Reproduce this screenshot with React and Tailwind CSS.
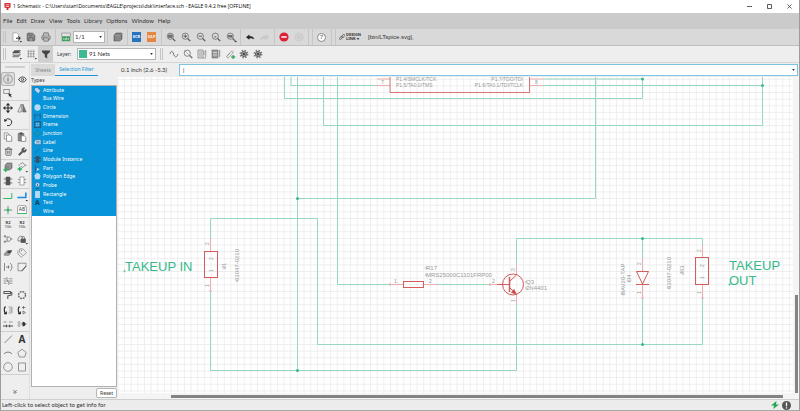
import React from "react";
import { Printer, Save, Eye, Trash2, Wrench, Move, ChevronsDown, Tags } from "lucide-react";

const INK = "#5a5a5a";

function Svg({ children, size = "size-[10px]" }) {
  return (
    <svg viewBox="0 0 10 10" className={`${size} shrink-0 overflow-visible`} fill="none" stroke={INK} strokeWidth="0.7" aria-hidden="true">
      {children}
    </svg>
  );
}

const Caret = () => <path d="M8.6 9l2.4 0-1.2 1.6z" fill="#333" stroke="none" />;

const Lens = ({ children }) => (
  <Svg>
    <circle cx="4.3" cy="4.2" r="3.1" />
    <path d="M6.6 6.5L9.3 9.2" strokeWidth="1.2" />
    {children}
  </Svg>
);

const icons = {
  newDoc: <Svg><path d="M2 .8h3.6L7.8 3v6.2H2z" fill="#fff" stroke="#777" strokeWidth="0.5" /><path d="M5 6.2h4M7.4 4.4L9.4 6.2 7.4 8" strokeWidth="1" stroke="#222" /><Caret /></Svg>,
  save: <Save className="size-[10px]" fill="#999" color="#555" strokeWidth={2} />,
  print: <Printer className="size-[10px]" color="#777" fill="#bbb" strokeWidth={2} />,
  board: <Svg><rect x=".8" y="1" width="8.4" height="3.6" fill="#ddd" stroke="#777" strokeWidth=".5" /><rect x=".8" y="4.6" width="8.4" height="4.6" fill="#3a9e58" stroke="none" /><path d="M2 3.2h6M2.3 7.8V6M4 6v1.8h1V6h1v1.8M7.5 6v1.8" stroke="#e9f7ec" strokeWidth=".6" /></Svg>,
  book: <Svg><path d="M1 3l2-2h6v6L7 9H1z" fill="#777" stroke="#444" strokeWidth=".5" /><path d="M1 3h6v6M7 3l2-2M3 3v6M5 3v6" stroke="#ccc" strokeWidth=".4" /></Svg>,
  undo: <Svg><path d="M1 5.2L4.4 2.6v1.6c2.6 0 4.2.3 4.9 3.3C8 6.3 6.600 6.200 4.400 6.200v1.600z" fill="#222" stroke="none" /></Svg>,
  redo: <Svg><path d="M9 5.200L5.600 2.600v1.600C3 4.200 1.400 4.500.7 7.500 2 6.300 3.400 6.200 5.600 6.200v1.600z" fill="#ccc" stroke="#bbb" strokeWidth=".4" /></Svg>,
  stop: <Svg><circle cx="5" cy="5" r="4.600" fill="#dd2034" stroke="none" /><path d="M2.300 5h5.400" stroke="#fff" strokeWidth="1.500" /></Svg>,
  go: <Svg><circle cx="5" cy="5" r="4.100" fill="#d2d2d2" stroke="#c9c9c9" /><path d="M4 3.300v3.400M6 3.300v3.400" stroke="#c6c6c6" /></Svg>,
  layers: <Svg><path d="M1.500 8L3.500 5.500h6L7.500 8z" fill="#999" stroke="#555" strokeWidth=".4" /><path d="M1.500 6L3.500 3.500h6L7.500 6z" fill="#ddd" stroke="#555" strokeWidth=".4" /><path d="M1.500 4L3.500 1.500h6L7.500 4z" fill="#555" stroke="#444" strokeWidth=".4" /><Caret /></Svg>,
  grid: <Svg><path d="M2.500.800v8M5 .8v8M7.500.800v8M1 2.300h8M1 4.800h8M1 7.300h8" stroke="#888" strokeWidth=".6" /><Caret /></Svg>,
  filter: <Svg><path d="M1 1.500h8v1.600L6.200 5.600V9.500L3.800 8V5.600L1 3.100z" fill="#444" stroke="none" /></Svg>,
  wave: <Svg><path d="M1 5C1.500 1.500 3.800 1.500 4.600 5S7.800 9 9 5" strokeWidth=".8" /></Svg>,
  probeLens: <Lens><path d="M1 1l8 8" stroke="#888" strokeWidth=".5" /></Lens>,
  sheet1: <Svg><path d="M1 1h5v8H1zM2 3h3M2 5h3M2 7h3" strokeWidth=".6" /><path d="M7 2v4M8.700 1v7M6 9h3" stroke="#777" /></Svg>,
  sheet2: <Svg><rect x="1" y="1" width="6" height="8" fill="#999" strokeWidth=".5" /><path d="M2 3.500h4M2 6h4" stroke="#eee" /><path d="M8.700 1v7" /></Svg>,
  clip: <Svg><path d="M1.500 7.500L6 2.500c1.200-1.200 3 .3 1.900 1.600L4 8.200C2.800 9.300 1 8.500 2.200 7L5.500 3.600" stroke="#777" strokeWidth=".6" /><path d="M8.200 6v4M6.200 8h4" stroke="#35a855" strokeWidth="1.300" /></Svg>,
  gear: <Svg><circle cx="5" cy="5" r="3.600" stroke="#777" strokeWidth="1.600" strokeDasharray="1.400 1.430" /><circle cx="5" cy="5" r="2.600" fill="#999" stroke="#555" strokeWidth=".8" /><circle cx="5" cy="5" r="1" fill="#333" stroke="none" /></Svg>,
  info: <Svg><circle cx="5" cy="5" r="4.300" strokeWidth=".5" /><path d="M5 4.200v3.300M5 2.300v1" strokeWidth=".9" /></Svg>,
  eye: <Eye className="size-[9px]" color="#444" strokeWidth={2.500} />,
  group: <Svg><rect x=".8" y="1.500" width="5.400" height="4" strokeWidth=".6" /><path d="M5.500 5l3.500 1.800-1.400.5 1.200 1.700-.9.500-1-1.700-1 1z" fill="#333" stroke="none" /></Svg>,
  move: <Move className="size-[10px]" color="#222" strokeWidth={2.500} />,
  mirror: <Svg><path d="M4.300 1v8H.800z" strokeWidth=".6" /><path d="M5.800 1v8h3.400z" fill="#777" strokeWidth=".6" /></Svg>,
  rotate: <Svg><path d="M2.300 3.300A3.500 3.500 0 1 1 4 8.500" stroke="#222" strokeWidth=".9" /><path d="M1 2l.6 3 2.600-1.400z" fill="#222" stroke="none" /></Svg>,
  copy: <Svg><path d="M1.200.800h3.500L6 2.300V7H1.200z" fill="#eee" strokeWidth=".5" /><path d="M3.500 3h3.500L8.700 4.700v4.600H3.500z" fill="#fff" strokeWidth=".6" /></Svg>,
  paste: <Svg><path d="M1.200 1.500h5.600V9H1.200z" fill="#888" strokeWidth=".5" /><path d="M2.800.800h2.400v1.400H2.800z" fill="#444" /><path d="M4.300 3.800h3L8.800 5.300v4.100H4.300z" fill="#fff" strokeWidth=".6" /></Svg>,
  trash: <Trash2 className="size-[9px]" color="#555" strokeWidth={2.200} />,
  wrench: <Wrench className="size-[9px]" color="#444" fill="#555" strokeWidth={1.500} />,
  addPart: <Svg><path d="M2 3l2-2h5v5L7 8H2z" fill="#888" stroke="#444" strokeWidth=".5" /><path d="M2 3h5v5M7 3l2-2" stroke="#ccc" strokeWidth=".4" /><path d="M2.600 5.500v4.400M.4 7.700h4.400" stroke="#2fae59" strokeWidth="1.400" /></Svg>,
  addGate: <Svg><path d="M3.500 1.500L6 .8 8 3.300 6 5.500 4 4.500M8 3.300h1.600M1.500 3h2" strokeWidth=".6" /><path d="M2.800 4.800v4.400M.6 7h4.400" stroke="#2fae59" strokeWidth="1.400" /><Caret /></Svg>,
  chip: <Svg><rect x="3" y="1" width="4" height="8" fill="#555" strokeWidth=".5" /><path d="M.8 3h2M.8 7h2M7 3h2.200M7 7h2.200" strokeWidth=".9" /></Svg>,
  chipOpen: <Svg><rect x="3" y="1" width="4" height="8" fill="#fff" strokeWidth=".5" /><path d="M.8 3.500h2M.8 6.500h2M7 3.500h2.200M7 6.500h2.200" strokeWidth=".5" /></Svg>,
  net: <Svg><path d="M.3 7.500h8.500V2" stroke="#36b86c" strokeWidth="1" /></Svg>,
  bus: <Svg><path d="M.3 6.500h8.500V1.500" stroke="#1e8be0" strokeWidth="1.600" /><Caret /></Svg>,
  junction: <Svg><path d="M5 .8v8.400M.800 5h8.400" stroke="#2f7a50" strokeWidth=".7" /><circle cx="5" cy="5" r="1.500" fill="#36b86c" stroke="none" /></Svg>,
  replace: <Svg><path d="M.8 2.300h2.500M2 1v2.600M.8 7.700h2.500M2 6.400V9M4 3h1.800c2.600 0 2.600 4.200 0 4.200H4zM7.800 5h1.700" strokeWidth=".7" /></Svg>,
  lock: <Svg><path d="M1 7V5.500C1 2 5 1 6 4M1 7h3" strokeWidth=".7" /><rect x="4" y="5" width="4.500" height="3.600" fill="#555" /><path d="M5 5V3.500c0-1.500 2.500-1.500 2.500 0V5" /><Caret /></Svg>,
  eraser: <Svg><path d="M.8 6.500L4 2.500h5L6 7.500H1.500z" fill="#999" strokeWidth=".3" /><path d="M4 4.500L5.500 2.500H9L7 5.500z" fill="#444" stroke="none" /></Svg>,
  tag: <Tags className="size-[10px]" color="#777" strokeWidth={1.600} />,
  pinswap: <Svg><path d="M1.500 1v8M3 5h3.500M5.500 3.500v3M7 1c2.500 1.500 2.500 6.500 0 8" strokeWidth=".7" /></Svg>,
  miter: <Svg><path d="M9 1.200H1v7.600h4.500L9 4.500z" strokeWidth=".6" /><path d="M4.500 9L9 4" strokeWidth="1" /></Svg>,
  split: <Svg><path d="M.5 2.800H3.500L6 7.200H9.500M.5 5H9.500M.5 7.200H3.500M6 2.800H9.500M3.500 1L5 2.800M5 7.200L6 9" strokeWidth=".6" /></Svg>,
  paint: <Svg><path d="M1 1.500h6.500v2H1zM7.500 2.500h1.300v2.300L4.800 6v3" strokeWidth="1.100" /></Svg>,
  ring: <Svg><circle cx="5" cy="5" r="3.500" strokeDasharray="1.800 .95" strokeWidth="1.300" /></Svg>,
  swapA: <Svg><path d="M2.500 1.500C.8 3 .8 7 2.500 8.500M1 8.700h2.300V6.500" strokeWidth="1.100" stroke="#222" /><path d="M5.500 2h3.500v6H5.500M6 4h3M6 6h3" strokeWidth=".5" /></Svg>,
  swapB: <Svg><path d="M2.500 1.500C.8 3 .8 7 2.500 8.500M1 8.700h2.300V6.500" strokeWidth="1.100" stroke="#222" /><path d="M6.500 1v3M5 2.500h3.500M6 6l2.500 1.500L6 9z" strokeWidth=".7" /></Svg>,
  gap: <Svg><path d="M.5 3h3M6 3h3.500" strokeWidth=".6" /><path d="M0 7h4M6 7h4M3 5.800L4.400 7 3 8.200M7 5.800L5.600 7 7 8.200" strokeWidth=".8" stroke="#222" /></Svg>,
  invoke: <Svg><circle cx="2" cy="3.500" r="1" strokeWidth=".5" /><circle cx="2" cy="6.500" r="1" strokeWidth=".5" /><path d="M3.800 5h5.700" /><path d="M5.500 2.700c4 0 4 4.600 0 4.600z" fill="#333" stroke="none" /></Svg>,
  line: <Svg><path d="M1.500 9L9 1.500" strokeWidth=".7" /></Svg>,
  arc: <Svg><path d="M1 6c2-2.500 6-2.500 8 0" strokeWidth=".8" /></Svg>,
  polygon: <Svg><path d="M5 1.200l4.200 3.200L7.700 9H2.300L.800 4.400z" strokeWidth=".6" /></Svg>,
  circle: <Svg><circle cx="5" cy="5" r="4.300" strokeWidth=".6" /></Svg>,
  rect: <Svg><rect x="1.700" y="1" width="6.600" height="8" strokeWidth=".6" /></Svg>,
};

const letterA = <span className="font-['Open_Sans'] text-[10px] leading-none font-bold text-[#333]">A</span>;
const labelIcon = (
  <span className="flex h-[9px] w-[10px] items-center justify-center rounded-t-[3px] border border-[#aaa] border-b-[#36b86c] bg-white text-[5px] leading-none text-[#333]">AB</span>
);
const valueIcon = (
  <span className="flex flex-col text-center text-[4px] leading-[4px] font-bold text-[#444]"><span>R2</span><span className="text-[#888]">10k</span></span>
);

const toolGroups = [
  { grow: "grow-2", rows: "grid-rows-2", tools: [["Info", icons.info], ["Show", icons.eye], ["Group", icons.group], null] },
  { grow: "grow-2", rows: "grid-rows-2", tools: [["Move", icons.move], ["Mirror", icons.mirror], ["Rotate", icons.rotate], null] },
  { grow: "grow-2", rows: "grid-rows-2", tools: [["Copy", icons.copy], ["Paste", icons.paste], ["Delete", icons.trash], ["Change", icons.wrench]] },
  { grow: "grow-2", rows: "grid-rows-2", tools: [["Add part", icons.addPart], ["Add gate", icons.addGate], ["Module", icons.chip], ["Port", icons.chipOpen]] },
  { grow: "grow-2", rows: "grid-rows-2", tools: [["Net", icons.net], ["Bus", icons.bus], ["Junction", icons.junction], ["Label", labelIcon]] },
  {
    grow: "grow-8",
    rows: "grid-rows-8",
    tools: [
      ["Name", valueIcon], ["Value", valueIcon], ["Replace", icons.replace], ["Lock", icons.lock],
      ["Smash", icons.eraser], ["Attribute", icons.tag], ["Pin swap", icons.pinswap], ["Miter", icons.miter],
      ["Split", icons.split], null, ["Paint", icons.paint], ["Optimize", icons.ring],
      ["Swap", icons.swapA], ["Gate swap", icons.swapB], ["Slice", icons.gap], ["Invoke", icons.invoke],
    ],
  },
  { grow: "grow-3", rows: "grid-rows-3", tools: [["Line", icons.line], ["Text", letterA], ["Arc", icons.arc], ["Polygon", icons.polygon], ["Circle", icons.circle], ["Rectangle", icons.rect]] },
];

const PALE = "#b5d9f3";
const DARK = "#265d86";
const types = [
  ["Attribute", <Svg size="size-[7px]"><path d="M1 1h4l4.500 4.500-3.500 4L1 5z" fill={PALE} stroke={DARK} /></Svg>],
  ["Bus Wire", <Svg size="size-[7px]"><path d="M0 8h8V1" stroke="#2389e8" strokeWidth="1.500" /></Svg>],
  ["Circle", <Svg size="size-[7px]"><circle cx="5" cy="5" r="4.500" fill={PALE} stroke="none" /></Svg>],
  ["Dimension", <Svg size="size-[7px]"><path d="M1 1v8M9 1v8M1 3h8" stroke={DARK} strokeWidth="1.200" /></Svg>],
  ["Frame", <Svg size="size-[7px]"><rect x="1" y="1" width="8" height="8" stroke={DARK} strokeWidth="2" /><rect x="3" y="3" width="4" height="4" stroke={PALE} /></Svg>],
  ["Junction", <Svg size="size-[7px]"><path d="M5 0v10M0 5h10" stroke={DARK} /><circle cx="5" cy="5" r="1.700" fill="#22a97e" stroke="none" /></Svg>],
  ["Label", <Svg size="size-[7px]"><path d="M0 5l2-4h8v7H2z" fill={PALE} stroke={DARK} /><path d="M3 3.500h5M3 5.500h5" stroke={DARK} /></Svg>],
  ["Line", <Svg size="size-[7px]"><path d="M1 9L9 1" stroke={DARK} /></Svg>],
  ["Module Instance", <Svg size="size-[7px]"><rect x="2.500" y="0" width="5" height="10" fill="#31566f" stroke="none" /><path d="M0 3h10M0 7h10" stroke="#31566f" strokeWidth="1.500" /></Svg>],
  ["Part", <Svg size="size-[7px]"><path d="M2 0v10M2 5l5-3M2 5l5 4" stroke={DARK} strokeWidth="1.200" /><path d="M4 4l4 2-4 3z" fill={PALE} stroke="none" /></Svg>],
  ["Polygon Edge", <Svg size="size-[7px]"><path d="M3 .5h4L9.500 4 8 9H2L.5 4z" fill={PALE} stroke="none" /></Svg>],
  ["Probe", <Svg size="size-[7px]"><circle cx="5" cy="4" r="3.300" fill={PALE} stroke={DARK} /><path d="M5 3v3M2.500 9.500h5" stroke={DARK} strokeWidth="1.300" /></Svg>],
  ["Rectangle", <Svg size="size-[7px]"><rect x="1.500" y="0" width="7" height="10" fill={PALE} stroke="none" /></Svg>],
  ["Text", <span className="text-[7px] leading-none font-bold text-[#12405f]">A</span>],
  ["Wire", <Svg size="size-[7px]"><path d="M2 1v4M4 8h5" stroke="#1d7fb8" /><circle cx="3.500" cy="6.500" r="1" fill="#22a97e" stroke="none" /></Svg>],
];

function Tool({ name, width = "w-[15px]", extra = "", children }) {
  return (
    <button type="button" aria-label={name} className={`flex h-full shrink-0 items-center justify-center ${width} ${extra}`}>
      {children}
    </button>
  );
}

const Sep = ({ width = "w-1" }) => (
  <div className={`flex h-full shrink-0 justify-center ${width}`}><div className="w-px bg-[#c6c6c6]" /></div>
);
const DoubleSep = ({ width = "w-2" }) => (
  <div className={`flex h-full shrink-0 justify-center gap-[3px] ${width}`}><div className="w-px bg-[#c6c6c6]" /><div className="w-px bg-[#c6c6c6]" /></div>
);
const Handle = ({ width = "w-[7px]" }) => (
  <div className={`flex h-3 shrink-0 justify-center gap-px ${width}`}><div className="w-px bg-[#c4c4c4]" /><div className="w-px bg-[#c4c4c4]" /></div>
);

function Combo({ id, label, value, width, pad }) {
  return (
    <div className={`relative h-[12px] shrink-0 ${width}`}>
      <select id={id} aria-label={label} className={`block size-full appearance-none border border-[#b4b4b4] bg-white font-['Lato',sans-serif] text-[6px] leading-none text-[#333] ${pad}`}>
        <option>{value}</option>
      </select>
      <svg viewBox="0 0 4 3" className="pointer-events-none absolute top-[5px] right-[3px] h-[2px] w-[3px]" aria-hidden="true"><path d="M0 0h4L2 3z" fill="#333" /></svg>
    </div>
  );
}

const wires = [
  "M284.500 77V98.500H642.500V79H543", "M291 77V85.500H378", "M297.500 77V370.500", "M297.500 198.500H595.500V77",
  "M323.500 77V125.500H762.500V77", "M543 85.500H762.500", "M337.500 77V284.500H390", "M437 284.500H490",
  "M210.500 238V218.500H317.500V344.500H702.500V298", "M210.500 291V370.500H516.500V303", "M516.500 265V238.500H702.500V245",
  "M642.500 238.500V258M642.500 298V344.500",
];
const dots = [[642.5, 79], [762.5, 85.5], [297.5, 198.5], [297.5, 370.5], [642.5, 238.5], [642.5, 344.5]];
const pins = [
  "M377 79H390M377 85.500H390M530 79H543M530 85.500H543", "M210.500 238V251M210.500 278V291", "M390 284.500H403M424 284.500H437",
  "M490 284.500H503M516.500 265V275M516.500 294V304", "M642.500 258V271M642.500 285V298", "M702.500 245V257M702.500 285V298",
  "M209 291h3M641 298h3M701 298h3M390 283v3M490 283v3",
];
const labels = [
  ["P1.4/SMCLK/TCK", 396, 81, "start"], ["P1.5/TA0.0/TMS", 396, 87, "start"],
  ["P1.7/TDO/TDI", 523, 81, "end"], ["P1.6/TA0.1/TDI/TCLK", 523, 87, "end"],
  ["7", 381, 84, "start"], ["8", 535, 84, "start"], ["1", 394, 283, "start"], ["2", 429, 283, "start"], ["2", 492, 283, "start"],
];
const names = [["R17", 426, 270], ["MRS25000C1101FRP00", 426, 277], ["Q3", 526, 284], ["2N4401", 526, 290]];
const vertical = [
  ["2", 209, 245, 5], ["1", 209, 287, 5], ["2", 213, 260, 5], ["1", 213, 272, 5], ["J1", 226, 269, 6], ["63047-0210", 239, 281, 6],
  ["3", 515, 271, 5], ["1", 515, 302, 5], ["BAV20-TAP", 625, 295, 6], ["D4", 631, 282, 6], ["2", 641, 265, 5], ["1", 641, 294, 5],
  ["63047-0210", 671, 289, 6], ["J63", 684, 275, 6], ["2", 701, 252, 5], ["1", 701, 294, 5], ["2", 704, 267, 5], ["1", 704, 279, 5],
];
const origins = [[224, 268], [237, 281], [426, 268], [426, 275], [526, 282], [526, 288], [623, 294], [629, 281], [669, 288], [682, 273]];

function Schematic() {
  return (
    <svg viewBox="118 77 675 316" preserveAspectRatio="xMinYMin meet" className="size-full font-['Liberation_Sans',sans-serif]" role="img" aria-label="Schematic">
      <defs>
        <pattern id="grid" x="210.500" y="370.500" width="6.648" height="6.630" patternUnits="userSpaceOnUse">
          <path d="M0 0H6.648M0 0V6.630" stroke="#e9e9e9" strokeWidth="1.400" />
        </pattern>
      </defs>
      <rect x="118" y="77" width="675" height="316" fill="url(#grid)" />
      <g fill="none" stroke="#99d8c0">{wires.map((d) => <path key={d} d={d} />)}</g>
      <g fill="none" stroke="#ecaeae">{pins.map((d) => <path key={d} d={d} />)}</g>
      <g fill="none" stroke="#d35c5c">
        <path d="M390 77V92.500H529.500V77" stroke="#d87474" />
        <rect x="204.500" y="251.500" width="13" height="26" />
        <rect x="403.500" y="281.500" width="20" height="6" />
        <rect x="695.500" y="257.500" width="13" height="27" />
        <path d="M636.500 271.500H648.500L642.500 284zM636 284.500H649" />
        <circle cx="513" cy="284.500" r="10.500" />
        <path d="M497 284.500H509M510 281L516.500 275M510 288L516.500 294" />
        <path d="M509.500 277V292" strokeWidth="1.500" />
        <path d="M516 294l-4.500-1.500 2.500-3z" fill="#c94040" />
      </g>
      <g fill="#36b98a">{dots.map(([x, y]) => <circle key={`${x}-${y}`} cx={x} cy={y} r="1.500" />)}</g>
      <g fill="#9a9a9a">
        {labels.map(([t, x, y, a]) => <text key={`${x}-${y}`} x={x} y={y} textAnchor={a} fontSize="5">{t}</text>)}
        {names.map(([t, x, y]) => <text key={t} x={x} y={y} fontSize="6">{t}</text>)}
        {vertical.map(([t, x, y, s]) => <text key={`${x}-${y}`} transform={`translate(${x} ${y}) rotate(-90)`} fontSize={s}>{t}</text>)}
      </g>
      <g stroke="#a8a8a8" strokeWidth="0.500">{origins.map(([x, y]) => <path key={`${x}-${y}`} d={`M${x - 1.5} ${y}h3M${x} ${y - 1.5}v3`} />)}</g>
      <g fill="#36b98a" fontSize="13">
        <text x="125" y="271">TAKEUP IN</text>
        <text x="729" y="270">TAKEUP</text>
        <text x="729" y="285">OUT</text>
      </g>
      <path d="M123 271h3M124.500 269.500v3M728 284.500h3M729.500 283v3" stroke="#36b98a" strokeWidth="0.500" />
    </svg>
  );
}

export default function App() {
  return (
    <div className="flex h-screen w-full flex-col overflow-hidden border-x border-[#9c9c9c] bg-[#eeeeee] font-['Noto_Sans','Open_Sans',sans-serif] text-[5px] leading-none text-[#333]">
      <header className="flex h-[13px] shrink-0 items-center bg-white pl-[3px] font-['Open_Sans',sans-serif] text-black">
        <svg viewBox="0 0 8 8" className="mr-[2px] size-[7px]" aria-hidden="true"><path d="M.5 0h7v5L5 6v2H3V6L.500 5z" fill="#d92b35" /><path d="M2 2h4M2 4h4" stroke="#fff" strokeWidth=".8" /></svg>
        <h1 className="flex-1 whitespace-nowrap">1 Schematic - C:\Users\stan\Documents\EAGLE\projects\dsk\interface.sch - EAGLE 9.4.2 free [OFFLINE]</h1>
        <div className="flex">
          {[["Minimize", "M0 2.500h5"], ["Maximize", "M.5 .5h4v4h-4z"], ["Close", "M.5.500l4 4M4.500.500l-4 4"]].map(([n, d]) => (
            <button key={n} type="button" aria-label={n} className="flex h-[13px] w-5 items-center justify-center">
              <svg viewBox="0 0 5 5" className="size-[5px]"><path d={d} fill="none" stroke="#333" strokeWidth=".8" /></svg>
            </button>
          ))}
        </div>
      </header>

      <nav className="flex h-[16px] shrink-0 items-center gap-1 bg-[#cbcbcb] pl-[2px] font-['Lato',sans-serif] text-[6px]">
        {["File", "Edit", "Draw", "View", "Tools", "Library", "Options", "Window", "Help"].map((m) => (
          <button key={m} type="button">{m}</button>
        ))}
      </nav>

      <div className="flex h-[17px] shrink-0 items-center border-b border-[#bfbfbf] bg-[#d9d9d9]">
        <Handle />
        <Tool name="New">{icons.newDoc}</Tool>
        <Tool name="Save">{icons.save}</Tool>
        <Tool name="Print">{icons.print}</Tool>
        <Sep width="w-[5px]" />
        <Tool name="Board">{icons.board}</Tool>
        <Combo id="sheet" label="Sheet" value="1/1" width="w-8" pad="pl-px" />
        <Sep width="w-[5px]" />
        <Tool name="Library">{icons.book}</Tool>
        <Sep />
        <Tool name="Script"><span className="flex h-[10px] w-[9px] items-center justify-center bg-[#2773bd] text-[4px] font-bold text-white">SCR</span></Tool>
        <Tool name="ULP"><span className="flex h-[10px] w-[9px] items-center justify-center bg-[#e58742] text-[4px] font-bold text-white">ULP</span></Tool>
        <Sep />
        <Tool name="Zoom to fit"><Lens><path d="M2.500 3h3.600v2.400H2.500z" fill="#777" /></Lens></Tool>
        <Tool name="Zoom in"><Lens><path d="M2.600 4.200H6M4.300 2.500v3.400" strokeWidth="1" /></Lens></Tool>
        <Tool name="Zoom out"><Lens><path d="M2.600 4.200H6" strokeWidth="1" /></Lens></Tool>
        <Tool name="Redraw"><Lens><path d="M3.300 4.800h2" strokeWidth="1" /></Lens></Tool>
        <Tool name="Zoom select"><Lens><path d="M2.500 3.500h3.600v1.600H2.500z" fill="#777" /><Caret /></Lens></Tool>
        <Sep />
        <Tool name="Undo">{icons.undo}</Tool>
        <Tool name="Redo">{icons.redo}</Tool>
        <Sep />
        <Tool name="Stop">{icons.stop}</Tool>
        <Tool name="Go">{icons.go}</Tool>
        <DoubleSep />
        <Tool name="Help"><span className="flex size-[9px] items-center justify-center rounded-full border border-[#888] bg-white text-[6px]">?</span></Tool>
        <DoubleSep />
        <button type="button" className="flex w-7 shrink-0 items-center gap-px pl-[2px] text-left text-[4px] leading-[4px] font-bold">
          <svg viewBox="0 0 8 8" className="size-[6px]" fill="none" stroke="#555" strokeWidth="1" aria-hidden="true"><rect x="0" y="4" width="5" height="2.500" rx="1.200" transform="rotate(-40 2.500 5)" /><rect x="3" y="1.500" width="5" height="2.500" rx="1.200" transform="rotate(-40 5.500 2.700)" /></svg>
          <span>DESIGN<br />LINK ▾</span>
        </button>
        <button type="button" className="pl-[3px] font-['Liberation_Sans',sans-serif] text-[6px] whitespace-nowrap">[bin/LTspice.svg],</button>
      </div>

      <div className="flex h-[17px] shrink-0 items-center border-b border-[#d6d6d6]">
        <Handle />
        <Tool name="Layers">{icons.layers}</Tool>
        <Tool name="Grid">{icons.grid}</Tool>
        <Tool name="Selection filter" extra="bg-[#cfcfcf]">{icons.filter}</Tool>
        <label htmlFor="layer" className="w-[24px] shrink-0 pl-1">Layer:</label>
        <div className="relative shrink-0">
          <Combo id="layer" label="Layer" value="91 Nets" width="w-[79px]" pad="pl-[11px]" />
          <span className="pointer-events-none absolute top-[2px] left-[2px] size-[8px] bg-[#3dba91]" />
        </div>
        <Handle width="w-[11px]" />
        {[["Simulate", icons.wave], ["Probe", icons.probeLens], ["Source", icons.sheet1], ["Model", icons.sheet2], ["Attach", icons.clip], ["Setup", icons.gear], ["Run", icons.gear]].map(([n, icon]) => (
          <Tool key={n} name={n} width="w-[14px]">{icon}</Tool>
        ))}
      </div>

      <main className="flex min-h-0 flex-1">
        <aside className="flex w-[29px] shrink-0 flex-col border-r border-[#dedede]">
          <div className="mx-1 mt-[3px] mb-1 h-[2px] shrink-0 border-y border-[#cfcfcf]" />
          <div className="flex h-[303px] shrink-0 flex-col divide-y divide-[#cfcfcf] border-b border-[#cfcfcf]">
            {toolGroups.map((g, i) => (
              <div key={i} className={`grid basis-0 grid-cols-2 ${g.grow} ${g.rows}`}>
                {g.tools.map((t, j) =>
                  t ? (
                    <button key={t[0]} type="button" aria-label={t[0]} className={`flex items-center justify-center ${i === 0 && j === 0 ? "rounded-[2px] border border-[#b5b5b5] bg-[#dddddd]" : ""}`}>
                      {t[1]}
                    </button>
                  ) : (
                    <span key={j} />
                  ),
                )}
              </div>
            ))}
          </div>
          <button type="button" aria-label="More tools" className="flex flex-1 items-end justify-center pb-1"><ChevronsDown className="size-[6px]" color="#333" strokeWidth={3} /></button>
        </aside>

        <section className="flex w-[88px] shrink-0 flex-col px-px pt-px">
          <div role="tablist" className="flex h-[12px] shrink-0">
            <button type="button" role="tab" aria-selected="false" className="w-6 bg-[#dadada] text-[#888]">Sheets</button>
            <button type="button" role="tab" aria-selected="true" className="w-[43px] border-b border-b-[#1b93d4] whitespace-nowrap text-[#1b93d4]">Selection Filter</button>
          </div>
          <h2 className="h-[9px] shrink-0 py-[2px]">Types</h2>
          <div className="min-h-0 flex-1 border border-[#b0b0b0] bg-white">
            <ul className="grid h-[130px] grid-rows-15 bg-[#0894d8] pl-[2px] text-white">
              {types.map(([t, icon]) => (
                <li key={t} className="flex items-center gap-[2px]">
                  <span className="flex w-[7px] justify-center">{icon}</span>
                  <span className="whitespace-nowrap">{t}</span>
                </li>
              ))}
            </ul>
          </div>
          <div className="flex h-[12px] shrink-0 justify-end py-px">
            <button type="button" className="w-[21px] rounded-[2px] border border-[#b5b5b5] bg-white">Reset</button>
          </div>
        </section>

        <section className="flex min-w-0 flex-1 flex-col">
          <div className="flex h-[14px] shrink-0 items-center py-px pr-px">
            <label htmlFor="command" className="w-[61px] shrink-0 pl-[3px] font-['Lato',sans-serif] text-[6px] whitespace-nowrap">0.1 inch (2.6 -5.3)</label>
            <div className="relative h-full flex-1">
              <input id="command" type="text" defaultValue="|" className="block size-full border border-[#7cc4e6] bg-white px-[2px] text-[6px]" />
              <svg viewBox="0 0 4 3" className="pointer-events-none absolute top-[5px] right-[3px] h-[2px] w-[3px]" aria-hidden="true"><path d="M0 0h4L2 3z" fill="#333" /></svg>
            </div>
          </div>
          <div className="flex min-h-0 flex-1">
            <div className="min-w-0 flex-1 overflow-hidden bg-white"><Schematic /></div>
            <div className="flex w-[6px] shrink-0 flex-col items-center justify-end bg-[#f4f4f4]">
              <div className="h-[31%] w-[3px] bg-[#838383]" />
            </div>
          </div>
          <div className="flex h-[6px] shrink-0 items-center justify-end bg-[#f4f4f4] pr-4">
            <div className="h-[3px] w-[92%] bg-[#838383]" />
          </div>
        </section>
      </main>

      <footer className="flex h-[12px] shrink-0 items-center justify-between border-y border-t-[#cfcfcf] border-b-[#a8a8a8] bg-[#ececec] pr-2 pl-px">
        <span className="font-['Lato',sans-serif] text-[6px]">Left-click to select object to get info for</span>
        <span className="flex items-center gap-[3px]">
          <svg viewBox="0 0 8 8" className="size-[8px]" aria-hidden="true"><path d="M5.500 0L0 4.600h3L2.300 8 8 3.500H5z" fill="#22a852" /></svg>
          <svg viewBox="0 0 9 9" className="size-[9px]" aria-hidden="true"><circle cx="4.500" cy="4.500" r="4.500" fill="#555" /><path d="M4.500 1.500v3.800M4.500 6.200v1.300" stroke="#fff" strokeWidth="1.300" /></svg>
        </span>
      </footer>
    </div>
  );
}
